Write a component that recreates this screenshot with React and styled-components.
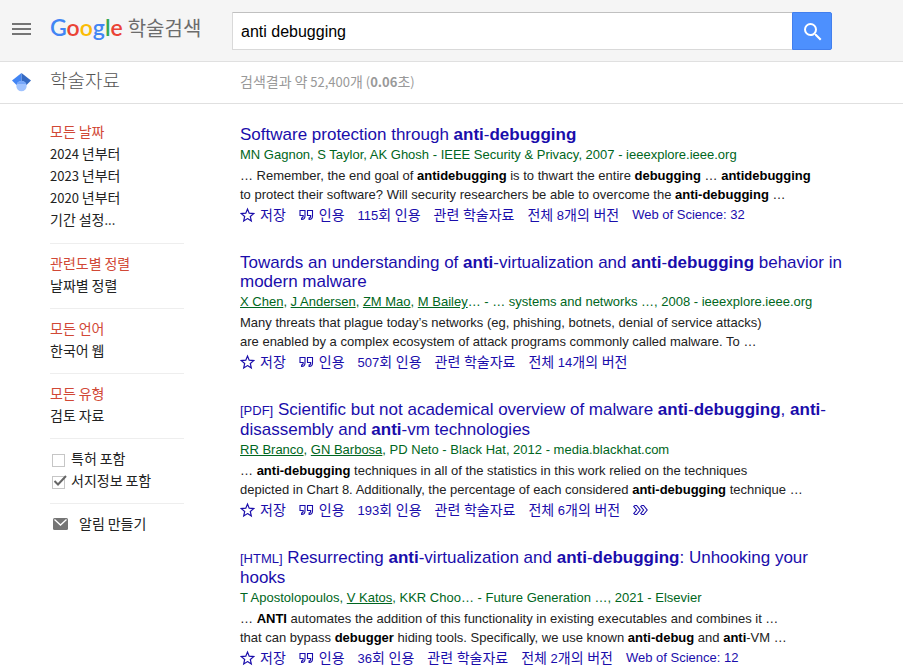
import React from "react";
import styled, { createGlobalStyle } from "styled-components";

const Global = createGlobalStyle`
  *, *::before, *::after { box-sizing: border-box; }
  body {
    margin: 0;
    background: #fff;
    color: #222;
    font: 13px "Liberation Sans", "Noto Sans CJK KR", sans-serif;
  }
  a { color: inherit; text-decoration: none; }
  a:hover { text-decoration: underline; }
  button, input { font-family: inherit; }
`;

const Hangul = styled.span`
  font-family: "Noto Sans CJK KR", sans-serif;
  font-size: 14px;
  font-weight: 400;
  line-height: 1;
`;

/* Sets the Korean runs of a mixed string in the Korean face. */
function Mixed({ children }) {
  return children
    .split(/([\uac00-\ud7a3]+)/)
    .map((run, i) => (i % 2 ? <Hangul key={i}>{run}</Hangul> : run));
}

/* Turns *word* into bold text and _name_ into an author link. */
function Rich({ text }) {
  return text.split(/(\*[^*]+\*|_[^_]+_)/).map((part, i) => {
    if (part[0] === "*") return <b key={i}>{part.slice(1, -1)}</b>;
    if (part[0] === "_") return <AuthorLink key={i} href="#author">{part.slice(1, -1)}</AuthorLink>;
    return part;
  });
}

const Header = styled.header`
  display: flex;
  align-items: flex-start;
  height: 62px;
  padding: 12px 12px 0;
  background: #f5f5f5;
  border-bottom: 1px solid #e0e0e0;
`;

const MenuButton = styled.button`
  display: flex;
  width: 38px;
  padding: 11px 0 0;
  border: 0;
  background: none;
`;

const Brand = styled.a`
  display: flex;
  align-items: baseline;
  gap: 5px;
  width: 182px;
  color: #6c6c6c;
  line-height: 30px;
  &:hover { text-decoration: none; }
`;

const Wordmark = styled.span`
  font-family: Lato, sans-serif;
  font-size: 23px;
  font-weight: 600;
`;

const Letter = styled.span`
  color: ${(p) => p.$color};
`;

const BrandName = styled.span`
  font-family: "Noto Sans CJK KR", sans-serif;
  font-size: 20px;
  font-weight: 400;
`;

const SearchForm = styled.form`
  display: flex;
  flex: 1;
  max-width: 600px;
  height: 38px;
`;

const SearchInput = styled.input`
  flex: 1;
  min-width: 0;
  padding: 1px 8px 0;
  border: 1px solid #d9d9d9;
  border-top-color: #c0c0c0;
  border-right: 0;
  border-radius: 1px 0 0 1px;
  background: #fff;
  color: #000;
  font-size: 16px;
  outline: 0;
`;

const SearchButton = styled.button`
  display: flex;
  align-items: center;
  justify-content: center;
  width: 40px;
  padding: 2px 0 0 2px;
  border: 1px solid #427fed;
  border-radius: 0 2px 2px 0;
  background: #4d90fe;
`;

const SubHeader = styled.div`
  display: flex;
  align-items: center;
  height: 42px;
  padding: 0 12px;
  border-bottom: 1px solid #e0e0e0;
`;

const CapSlot = styled.span`
  display: flex;
  width: 38px;
`;

const PageName = styled.h1`
  width: 190px;
  margin: 0;
  padding-bottom: 5px;
  color: #555;
  font-family: "Noto Sans CJK KR", sans-serif;
  font-size: 19px;
  font-weight: 300;
  line-height: 32px;
`;

const Stats = styled.div`
  padding-bottom: 2px;
  color: #999;
  font-family: "Noto Sans CJK KR", sans-serif;
  line-height: 20px;
`;

const Body = styled.div`
  display: flex;
  gap: 56px;
  padding: 17px 12px 0 50px;
`;

const Sidebar = styled.nav`
  flex: none;
  width: 134px;
  font-family: "Noto Sans CJK KR", sans-serif;
`;

const FilterGroup = styled.ul`
  margin: 0;
  padding: 0 0 12px;
  list-style: none;
  & + & {
    padding: 9px 0 11px;
    border-top: 1px solid #eee;
  }
`;

const FilterItem = styled.li`
  height: 22px;
  line-height: 22px;
  white-space: nowrap;
  color: ${(p) => (p.$active ? "#d14836" : "#222")};
`;

const CheckLabel = styled.label`
  position: relative;
  display: flex;
  align-items: center;
  gap: 6px;
  padding-left: 2px;
`;

const CheckBox = styled.input`
  appearance: none;
  width: 13px;
  height: 13px;
  margin: 2px 0 0;
  border: 1px solid #c6c6c6;
  background: #fff;
`;

const Tick = styled.svg`
  position: absolute;
  left: 3px;
  top: 4px;
`;

const AlertLink = styled.a`
  display: flex;
  align-items: center;
  gap: 11px;
  padding-left: 3px;
`;

const Results = styled.main`
  flex: 1;
  max-width: 610px;
  padding-top: 4px;
`;

const Result = styled.article`
  margin-bottom: 28px;
`;

const Title = styled.h2`
  margin: 0 0 ${(p) => (p.$tagged ? 0 : 1)}px;
  color: #1a0dab;
  font-size: 17px;
  font-weight: 400;
  line-height: ${(p) => (p.$tagged ? 20 : 19)}px;
`;

const Tag = styled.span`
  font-size: 13px;
  line-height: 1;
`;

const Authors = styled.div`
  color: #006621;
  line-height: 20px;
`;

const AuthorLink = styled.a`
  text-decoration: underline;
`;

const Snippet = styled.p`
  margin: 1px 0 0;
  line-height: 19px;
  b { color: #000; }
`;

const SnippetLine = styled.span`
  display: block;
`;

const Actions = styled.div`
  display: flex;
  align-items: center;
  gap: 13px;
  height: 21px;
  color: #1a0dab;
  white-space: nowrap;
`;

const Action = styled.a`
  display: flex;
  align-items: center;
  gap: 5px;
  white-space: pre;
`;

const MenuIcon = () => (
  <svg width="19" height="12" viewBox="0 0 19 12" fill="#757575">
    <path d="M0 0h19v2H0zM0 5h19v2H0zM0 10h19v2H0z" />
  </svg>
);

const SearchIcon = () => (
  <svg width="24" height="24" viewBox="0 0 24 24" fill="#fff">
    <path d="M15.5 14h-.79l-.28-.27A6.47 6.47 0 0 0 16 9.5 6.5 6.5 0 1 0 9.5 16c1.61 0 3.09-.59 4.23-1.57l.27.28v.79l5 4.99L20.49 19l-4.99-5zm-6 0a4.5 4.5 0 1 1 0-9 4.5 4.5 0 0 1 0 9z" />
  </svg>
);

const CapIcon = () => (
  <svg width="19" height="19" viewBox="0 0 19 19">
    <path d="M0 7.5 9.5 0v13L4.5 12z" fill="#4285f4" />
    <path d="M19 7.5 9.5 0v13l5-1z" fill="#356ac3" />
    <circle cx="9.5" cy="13" r="5.2" fill="#a0c3ff" />
    <path d="M4.8 11a5.2 5.2 0 0 1 9.4 0z" fill="#76a7fa" />
  </svg>
);

const StarIcon = () => (
  <svg width="15" height="16" viewBox="0 0 15 16" fill="none" stroke="#1a0dab" strokeWidth="1.2">
    <path d="M7.5 11.6l3.8 2.3-1-4.4 3.4-2.9-4.5-.4-1.7-4.1-1.7 4.1-4.5.4 3.4 2.9-1 4.4z" />
  </svg>
);

const QuoteIcon = () => (
  <svg width="15" height="16" viewBox="0 0 15 16" fill="none" stroke="#1a0dab" strokeWidth="1.1">
    <path d="M1 3.5h5v5.2c0 2.2-1.3 3.8-3.4 3.8v-1.4c1 0 1.6-.9 1.6-2.6H1zM8.5 3.5h5v5.2c0 2.2-1.3 3.8-3.4 3.8v-1.4c1 0 1.6-.9 1.6-2.6H8.5z" />
  </svg>
);

const MoreIcon = () => (
  <svg width="15" height="16" viewBox="0 0 15 16" fill="none" stroke="#1a0dab" strokeWidth="1.1">
    <path d="M.8 4.5 2 3.5h1.6L7.2 8l-3.6 4.5H2l-1.2-1L3.6 8zM7.8 4.5 9 3.5h1.6L14.2 8l-3.6 4.5H9l-1.2-1L10.6 8z" />
  </svg>
);

const MailIcon = () => (
  <svg width="15" height="12" viewBox="0 0 15 12">
    <rect width="15" height="12" rx="1.5" fill="#757575" />
    <path d="M1.5 1.5l6 5.5 6-5.5" fill="none" stroke="#fff" strokeWidth="1.3" />
  </svg>
);

const wordmark = [
  ["G", "#4285f4"],
  ["o", "#ea4335"],
  ["o", "#fbbc05"],
  ["g", "#4285f4"],
  ["l", "#34a853"],
  ["e", "#ea4335"],
];

const filterGroups = [
  ["모든 날짜", "2024 년부터", "2023 년부터", "2020 년부터", "기간 설정..."],
  ["관련도별 정렬", "날짜별 정렬"],
  ["모든 언어", "한국어 웹"],
  ["모든 유형", "검토 자료"],
];

const results = [
  {
    title: "Software protection through *anti*-*debugging*",
    authors: "MN Gagnon, S Taylor, AK Ghosh - IEEE Security & Privacy, 2007 - ieeexplore.ieee.org",
    snippet: [
      "… Remember, the end goal of *antidebugging* is to thwart the entire *debugging* … *antidebugging*",
      "to protect their software? Will security researchers be able to overcome the *anti-debugging* …",
    ],
    links: ["115회 인용", "관련 학술자료", "전체 8개의 버전", "Web of Science: 32"],
  },
  {
    title: "Towards an understanding of *anti*-virtualization and *anti*-*debugging* behavior in modern malware",
    authors: "_X Chen_, _J Andersen_, _ZM Mao_, _M Bailey_… - … systems and networks …, 2008 - ieeexplore.ieee.org",
    snippet: [
      "Many threats that plague today’s networks (eg, phishing, botnets, denial of service attacks)",
      "are enabled by a complex ecosystem of attack programs commonly called malware. To …",
    ],
    links: ["507회 인용", "관련 학술자료", "전체 14개의 버전"],
  },
  {
    tag: "[PDF]",
    title: "Scientific but not academical overview of malware *anti*-*debugging*, *anti*-disassembly and *anti*-vm technologies",
    authors: "_RR Branco_, _GN Barbosa_, PD Neto - Black Hat, 2012 - media.blackhat.com",
    snippet: [
      "… *anti-debugging* techniques in all of the statistics in this work relied on the techniques",
      "depicted in Chart 8. Additionally, the percentage of each considered *anti-debugging* technique …",
    ],
    links: ["193회 인용", "관련 학술자료", "전체 6개의 버전"],
    more: true,
  },
  {
    tag: "[HTML]",
    title: "Resurrecting *anti*-virtualization and *anti*-*debugging*: Unhooking your hooks",
    authors: "T Apostolopoulos, _V Katos_, KKR Choo… - Future Generation …, 2021 - Elsevier",
    snippet: [
      "… *ANTI* automates the addition of this functionality in existing executables and combines it …",
      "that can bypass *debugger* hiding tools. Specifically, we use known *anti-debug* and *anti*-VM …",
    ],
    links: ["36회 인용", "관련 학술자료", "전체 2개의 버전", "Web of Science: 12"],
  },
];

function ResultItem({ tag, title, authors, snippet, links, more }) {
  return (
    <Result>
      <Title $tagged={Boolean(tag)}>
        {tag && <><Tag>{tag}</Tag>{" "}</>}
        <a href="#result"><Rich text={title} /></a>
      </Title>
      <Authors><Rich text={authors} /></Authors>
      <Snippet>
        {snippet.map((line) => (
          <SnippetLine key={line}><Rich text={line} /></SnippetLine>
        ))}
      </Snippet>
      <Actions>
        <Action href="#save"><StarIcon /><span><Mixed>저장</Mixed></span></Action>
        <Action href="#cite"><QuoteIcon /><span><Mixed>인용</Mixed></span></Action>
        {links.map((link) => (
          <Action key={link} href="#link"><span><Mixed>{link}</Mixed></span></Action>
        ))}
        {more && <Action href="#more" aria-label="더보기"><MoreIcon /></Action>}
      </Actions>
    </Result>
  );
}

function CheckItem({ label, checked }) {
  return (
    <FilterItem>
      <CheckLabel>
        <CheckBox type="checkbox" defaultChecked={checked} />
        {checked && (
          <Tick width="15" height="13" viewBox="0 0 15 13" fill="none" stroke="#666" strokeWidth="2">
            <path d="M1.5 7 5 10.5 13 2" />
          </Tick>
        )}
        <span><Mixed>{label}</Mixed></span>
      </CheckLabel>
    </FilterItem>
  );
}

export default function App() {
  return (
    <>
      <Global />
      <Header>
        <MenuButton type="button" aria-label="메뉴"><MenuIcon /></MenuButton>
        <Brand href="#home">
          <Wordmark>
            {wordmark.map(([letter, color], i) => (
              <Letter key={i} $color={color}>{letter}</Letter>
            ))}
          </Wordmark>
          <BrandName>학술검색</BrandName>
        </Brand>
        <SearchForm>
          <SearchInput type="text" aria-label="검색" defaultValue="anti debugging" />
          <SearchButton type="submit" aria-label="검색"><SearchIcon /></SearchButton>
        </SearchForm>
      </Header>
      <SubHeader>
        <CapSlot><CapIcon /></CapSlot>
        <PageName>학술자료</PageName>
        <Stats><Mixed>검색결과 약 52,400개 (</Mixed><b>0.06</b><Mixed>초)</Mixed></Stats>
      </SubHeader>
      <Body>
        <Sidebar>
          {filterGroups.map((items) => (
            <FilterGroup key={items[0]}>
              {items.map((item, i) => (
                <FilterItem key={item} $active={i === 0}>
                  <a href="#filter"><Mixed>{item}</Mixed></a>
                </FilterItem>
              ))}
            </FilterGroup>
          ))}
          <FilterGroup>
            <CheckItem label="특허 포함" />
            <CheckItem label="서지정보 포함" checked />
          </FilterGroup>
          <FilterGroup>
            <FilterItem>
              <AlertLink href="#alert"><MailIcon /><span><Mixed>알림 만들기</Mixed></span></AlertLink>
            </FilterItem>
          </FilterGroup>
        </Sidebar>
        <Results>
          {results.map((result) => (
            <ResultItem key={result.title} {...result} />
          ))}
        </Results>
      </Body>
    </>
  );
}
